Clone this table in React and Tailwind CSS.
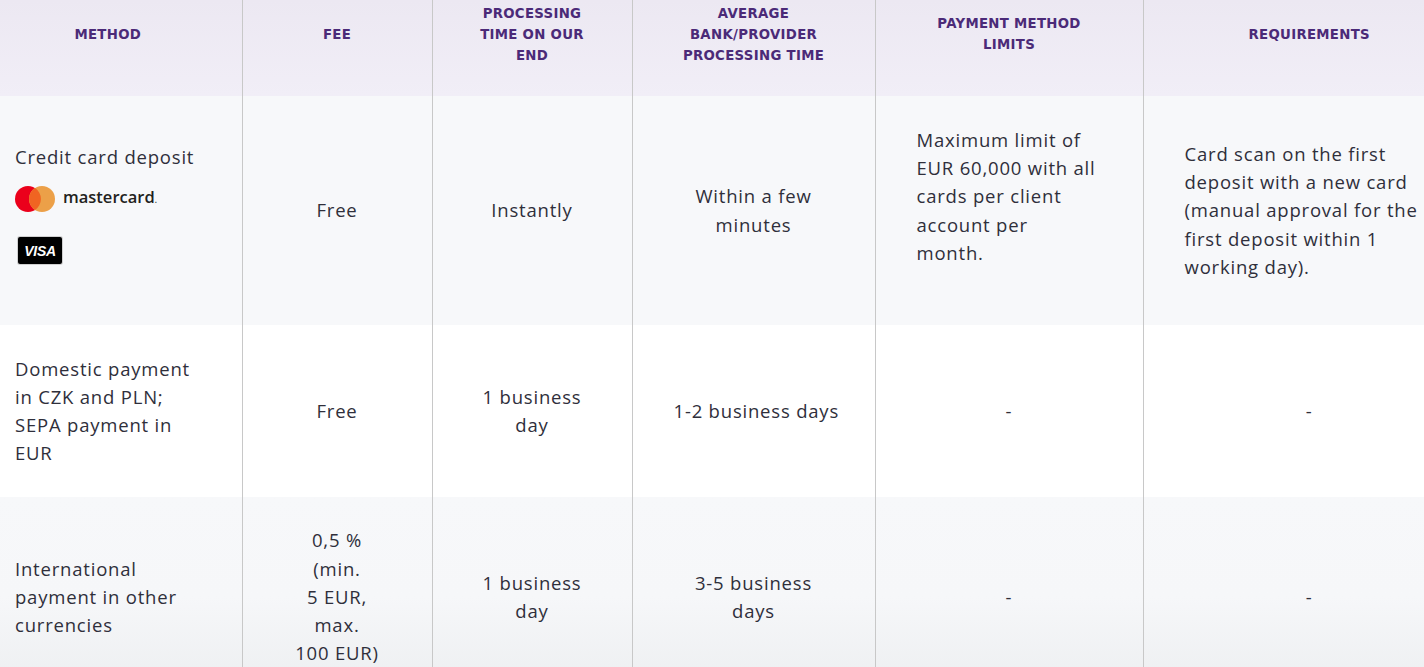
import React from "react";

const cols = [268, 190, 200, 243, 268, 332];

const headers = [
  ["METHOD"],
  ["FEE"],
  ["PROCESSING", "TIME ON OUR", "END"],
  ["AVERAGE", "BANK/PROVIDER", "PROCESSING TIME"],
  ["PAYMENT METHOD", "LIMITS"],
  ["REQUIREMENTS"],
];

function Lines({ lines }) {
  return lines.map((l, i) => (
    <div key={i} className="whitespace-nowrap">
      {l}
    </div>
  ));
}

function Mastercard() {
  return (
    <div className="flex items-center gap-[8px]">
      <svg width="40" height="26" viewBox="0 0 40 26">
        <circle cx="13" cy="13" r="13" fill="#eb001b" />
        <circle cx="27" cy="13" r="13" fill="#eca048" />
        <path d="M20 2.1a13 13 0 0 1 0 21.8a13 13 0 0 1 0-21.8z" fill="#f06422" />
      </svg>
      <span className="font-['Open_Sans',sans-serif] text-[16.5px] font-semibold tracking-[0px] text-[#231f20]">
        mastercard<span className="text-[8px] align-baseline">.</span>
      </span>
    </div>
  );
}

function Visa() {
  return (
    <div className="ml-[3px] flex h-[27px] w-[44px] items-center justify-center rounded-[2px] bg-black shadow-[0_0_0_1px_#d0d0d0]">
      <span className="font-['Liberation_Sans',sans-serif] text-[14px] font-bold italic tracking-[-0.3px] text-white">
        VISA
      </span>
    </div>
  );
}

const rows = [
  {
    h: "h-[229px]",
    bg: "bg-[#f7f8fa]",
    cells: [
      <div className="pb-[14px]">
        <div>Credit card deposit</div>
        <div className="mt-[12px]">
          <Mastercard />
        </div>
        <div className="mt-[23px]">
          <Visa />
        </div>
      </div>,
      <Lines lines={["Free"]} />,
      <Lines lines={["Instantly"]} />,
      <Lines lines={["Within a few", "minutes"]} />,
      <div className="pb-[28px]">
        <Lines
          lines={["Maximum limit of", "EUR 60,000 with all", "cards per client", "account per", "month."]}
        />
      </div>,
      <Lines
        lines={[
          "Card scan on the first",
          "deposit with a new card",
          "(manual approval for the",
          "first deposit within 1",
          "working day).",
        ]}
      />,
    ],
    align: ["left", "center", "center", "center", "left", "left"],
  },
  {
    h: "h-[172px]",
    bg: "bg-white",
    cells: [
      <Lines lines={["Domestic payment", "in CZK and PLN;", "SEPA payment in", "EUR"]} />,
      <Lines lines={["Free"]} />,
      <Lines lines={["1 business", "day"]} />,
      <Lines lines={["1-2 business days"]} />,
      <Lines lines={["-"]} />,
      <Lines lines={["-"]} />,
    ],
    align: ["left", "center", "center", "center", "center", "center"],
  },
  {
    h: "h-[200px]",
    bg: "bg-linear-to-b from-[#f7f8fa] via-[#f6f7f9] to-[#eceef0]",
    cells: [
      <Lines lines={["International", "payment in other", "currencies"]} />,
      <Lines lines={["0,5 %", "(min.", "5 EUR,", "max.", "100 EUR)"]} />,
      <Lines lines={["1 business", "day"]} />,
      <Lines lines={["3-5 business", "days"]} />,
      <Lines lines={["-"]} />,
      <Lines lines={["-"]} />,
    ],
    align: ["left", "center", "center", "center", "center", "center"],
  },
];

export default function App() {
  return (
    <div className="h-[667px] w-[1424px] overflow-hidden bg-white">
      <table className="ml-[-26px] w-[1501px] table-fixed border-collapse">
        <colgroup>
          {cols.map((w, i) => (
            <col key={i} style={{ width: w }} />
          ))}
        </colgroup>
        <thead>
          <tr className="h-[96px] bg-linear-to-b from-[#ece8f2] to-[#f1eef7]">
            {headers.map((lines, i) => (
              <th
                key={i}
                className={`pb-[28px] align-middle text-center font-['DejaVu_Sans',sans-serif] text-[13.3px] font-bold leading-[21px] tracking-[0.3px] text-[#4b2a78] ${
                  i > 0 ? "border-l border-[#c8c8c8]" : ""
                }`}
              >
                <Lines lines={lines} />
              </th>
            ))}
          </tr>
        </thead>
        <tbody>
          {rows.map((row, r) => (
            <tr key={r} className={`${row.h} ${row.bg}`}>
              {row.cells.map((c, i) => (
                <td
                  key={i}
                  className={`align-middle px-[41px] font-['Open_Sans',sans-serif] text-[18.5px] leading-[28.25px] tracking-[0.8px] text-[#2f2f3b] ${
                    row.align[i] === "center" ? "text-center" : "text-left"
                  } ${i > 0 ? "border-l border-[#c8c8c8]" : ""}`}
                >
                  {c}
                </td>
              ))}
            </tr>
          ))}
        </tbody>
      </table>
    </div>
  );
}
